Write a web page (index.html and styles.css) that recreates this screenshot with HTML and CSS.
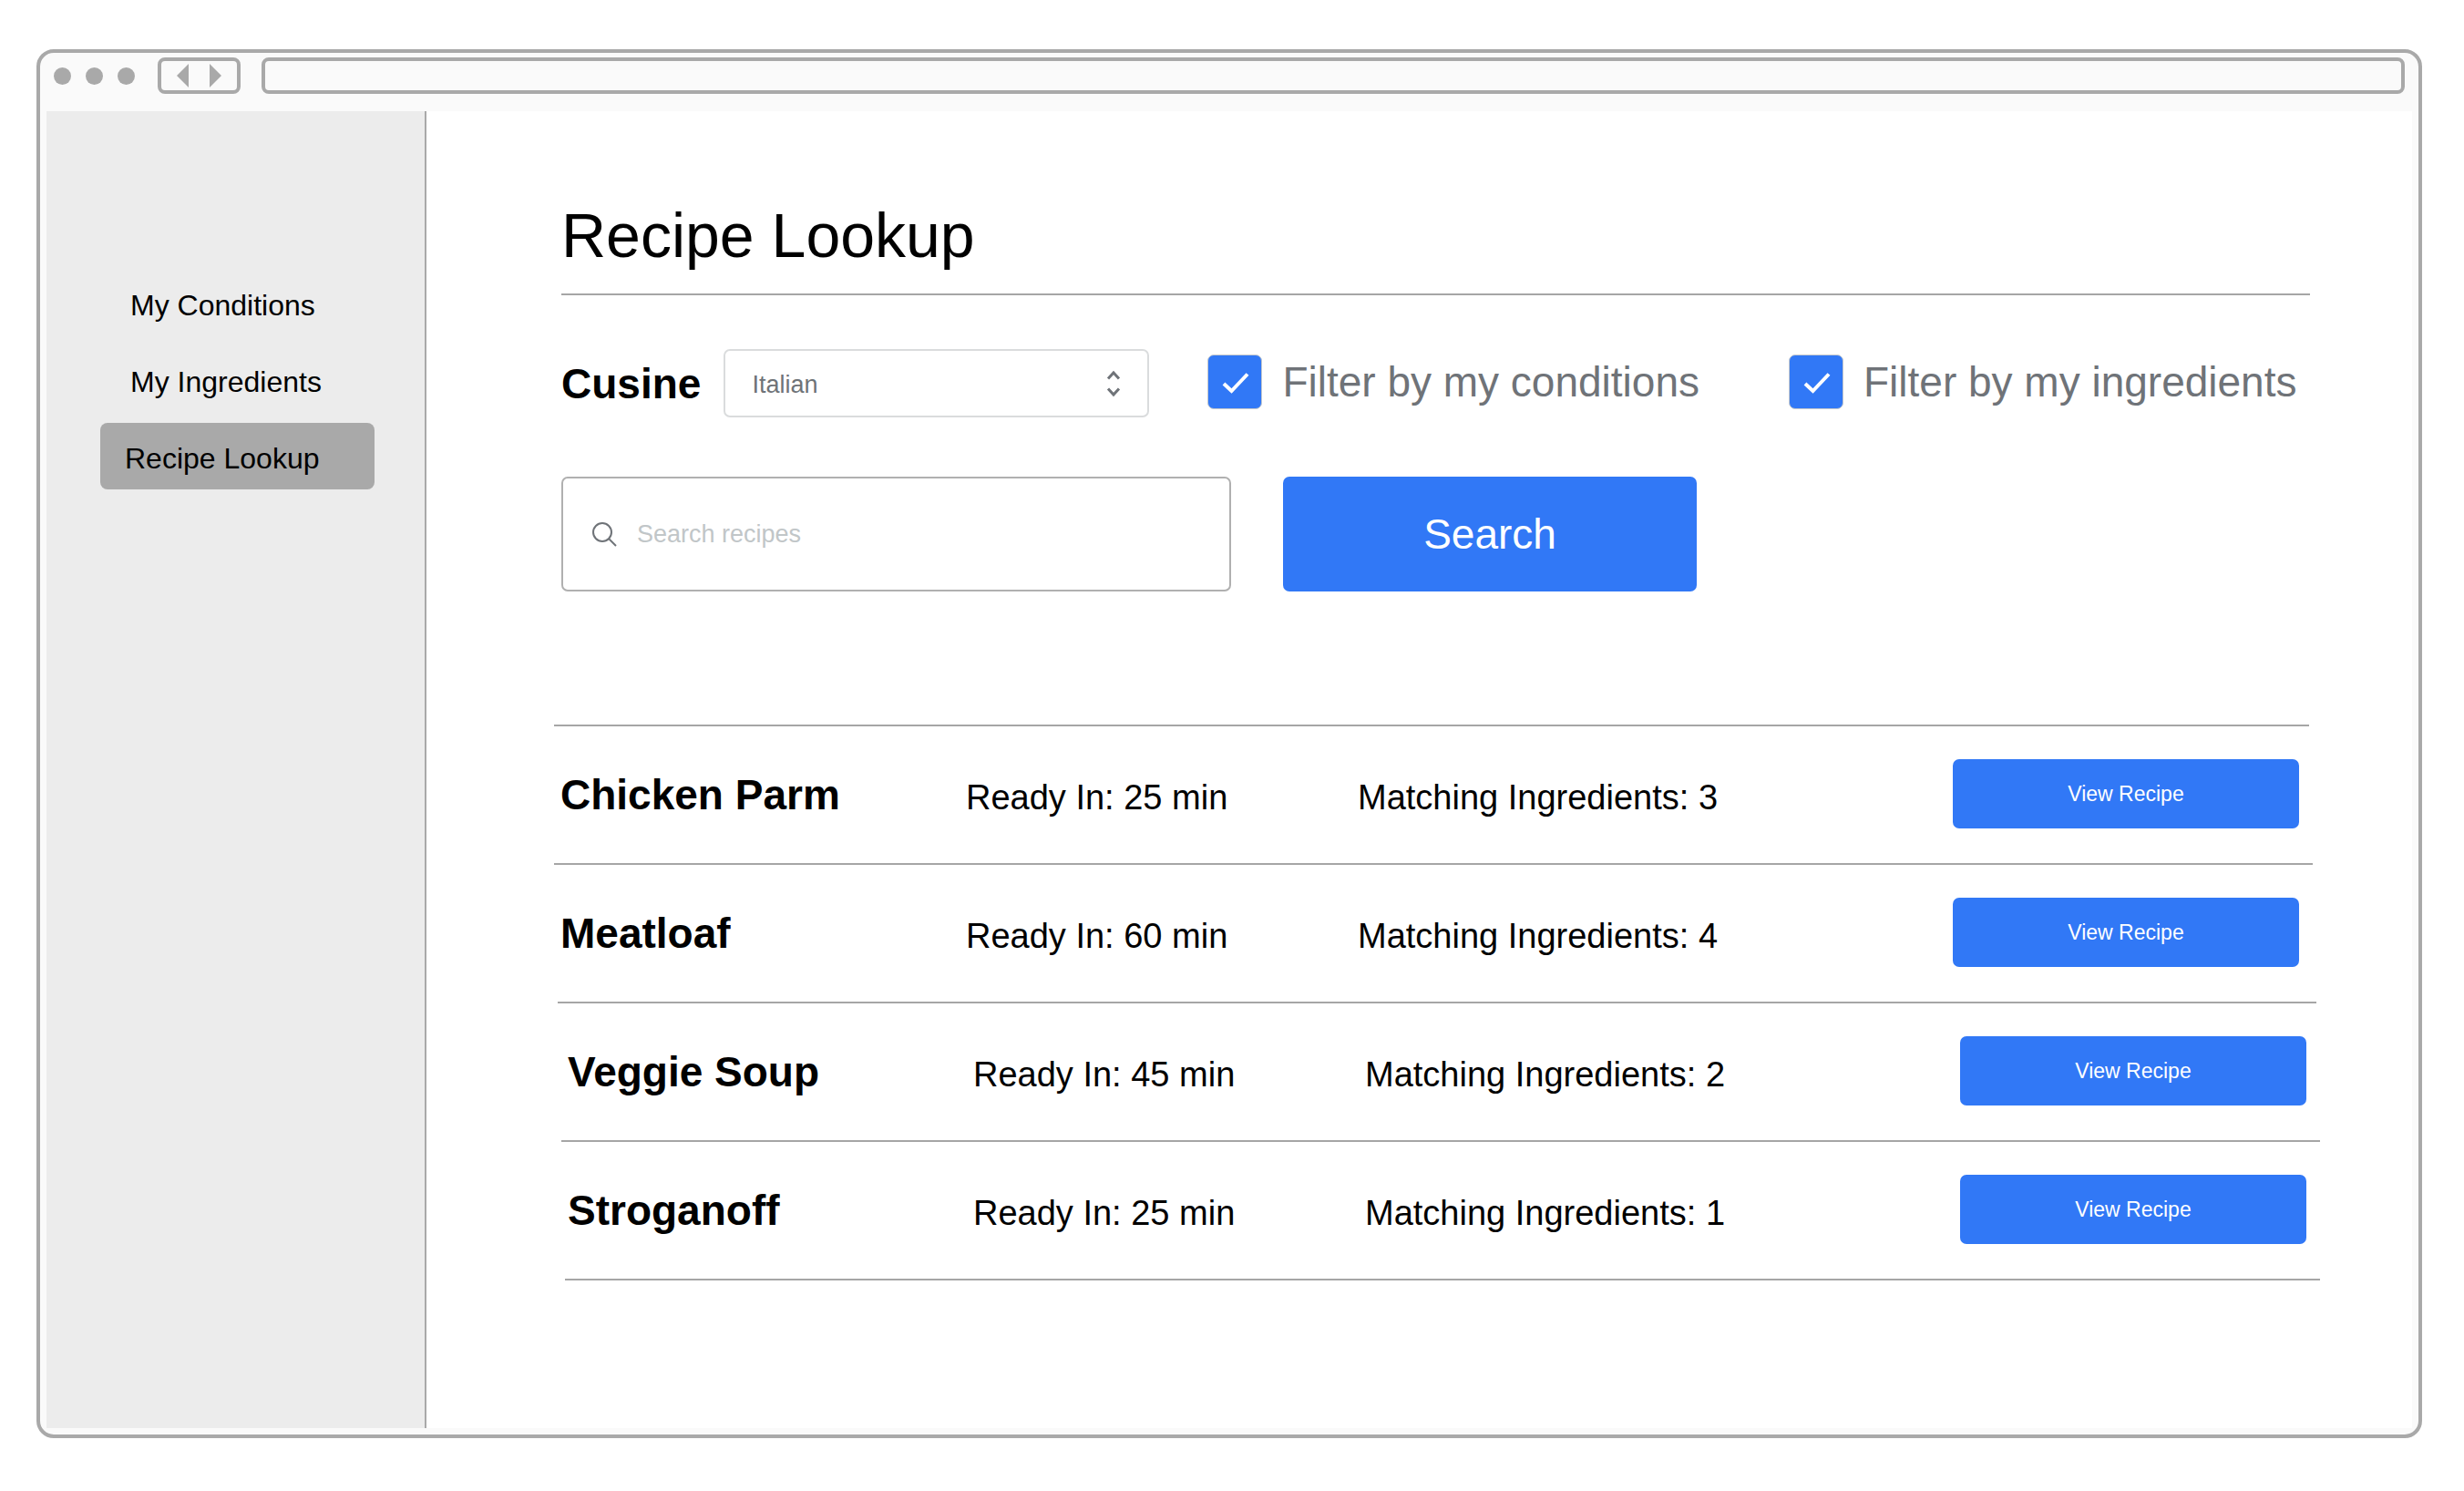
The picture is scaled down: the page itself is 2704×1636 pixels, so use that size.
FILE: index.html
```html
<!DOCTYPE html>
<html lang="en">
<head>
<meta charset="utf-8">
<meta name="viewport" content="width=device-width, initial-scale=1">
<title>Recipe Lookup</title>
<link rel="stylesheet" href="styles.css">
</head>
<body>
<div class="window">
  <header class="toolbar">
    <div class="dots"><span class="dot"></span><span class="dot"></span><span class="dot"></span></div>
    <div class="history">
      <button class="history-button" type="button" aria-label="Back"><svg width="13" height="26" viewBox="0 0 13 26"><path d="M13 0v26L0 13z"/></svg></button>
      <button class="history-button" type="button" aria-label="Forward"><svg width="13" height="26" viewBox="0 0 13 26"><path d="M0 0v26l13-13z"/></svg></button>
    </div>
    <input class="address" type="text" aria-label="Address">
  </header>
  <div class="page">
    <nav class="sidebar">
      <a class="nav-link" href="#conditions">My Conditions</a>
      <a class="nav-link" href="#ingredients">My Ingredients</a>
      <a class="nav-link nav-link-active" href="#lookup" aria-current="page">Recipe Lookup</a>
    </nav>
    <main class="content">
      <h1 class="title">Recipe Lookup</h1>
      <form class="lookup">
        <div class="filters">
          <label class="cuisine-label" for="cuisine">Cusine</label>
          <div class="select-wrap">
            <select class="select" id="cuisine"><option>Italian</option></select>
            <svg class="select-arrows" width="16" height="30" viewBox="0 0 16 30"><path d="M2 9.500l6-6.500 6 6.500M2 20.500l6 6.500 6-6.500"/></svg>
          </div>
          <div class="check">
            <span class="check-box"><input class="check-input" type="checkbox" id="by-conditions" checked><svg class="check-mark" width="60" height="60" viewBox="0 0 60 60"><path d="M18 32l8.500 8L44 21.500"/></svg></span>
            <label for="by-conditions">Filter by my conditions</label>
          </div>
          <div class="check check-last">
            <span class="check-box"><input class="check-input" type="checkbox" id="by-ingredients" checked><svg class="check-mark" width="60" height="60" viewBox="0 0 60 60"><path d="M18 32l8.500 8L44 21.500"/></svg></span>
            <label for="by-ingredients">Filter by my ingredients</label>
          </div>
        </div>
        <div class="search">
          <div class="search-field">
            <svg width="28" height="28" viewBox="0 0 28 28"><circle cx="12" cy="12" r="10"/><path d="M19 19l8 8"/></svg>
            <input class="search-input" type="text" placeholder="Search recipes" aria-label="Search recipes">
          </div>
          <button class="button search-button" type="button">Search</button>
        </div>
      </form>
      <section class="results" aria-label="Recipes">
        <hr class="rule right-3">
        <article class="recipe">
          <h2 class="recipe-name">Chicken Parm</h2>
          <p class="recipe-fact">Ready In: 25 min</p>
          <p class="recipe-fact">Matching Ingredients: 3</p>
          <button class="button" type="button">View Recipe</button>
        </article>
        <hr class="rule right-2">
        <article class="recipe">
          <h2 class="recipe-name">Meatloaf</h2>
          <p class="recipe-fact">Ready In: 60 min</p>
          <p class="recipe-fact">Matching Ingredients: 4</p>
          <button class="button" type="button">View Recipe</button>
        </article>
        <hr class="rule left-1 right-1">
        <article class="recipe recipe-shifted">
          <h2 class="recipe-name">Veggie Soup</h2>
          <p class="recipe-fact">Ready In: 45 min</p>
          <p class="recipe-fact">Matching Ingredients: 2</p>
          <button class="button" type="button">View Recipe</button>
        </article>
        <hr class="rule left-2">
        <article class="recipe recipe-shifted">
          <h2 class="recipe-name">Stroganoff</h2>
          <p class="recipe-fact">Ready In: 25 min</p>
          <p class="recipe-fact">Matching Ingredients: 1</p>
          <button class="button" type="button">View Recipe</button>
        </article>
        <hr class="rule left-3">
      </section>
    </main>
  </div>
</div>
</body>
</html>
```
FILE: styles.css
```css
:root {
  --line: #a6a6a6;
  --frame: #a9a9a9;
  --blue: #3178f6;
  --muted: #6f7378;
}

* {
  box-sizing: border-box;
}

body {
  margin: 0;
  padding: 54px 46px 58px 40px;
  background: #fff;
  color: #000;
  font-family: "Liberation Sans", Arial, sans-serif;
}

button,
input,
select {
  font: inherit;
}

/* Browser frame */
.window {
  display: flex;
  flex-direction: column;
  min-height: calc(100vh - 112px);
  border: 4px solid var(--frame);
  border-radius: 19px;
  background: #fafafa;
}

.toolbar {
  display: flex;
  align-items: flex-start;
  height: 64px;
  padding: 5px 15px 0;
}

.dots {
  display: flex;
  align-items: center;
  gap: 16px;
  height: 40px;
  margin-right: 25px;
}

.dot {
  width: 19px;
  height: 19px;
  border-radius: 50%;
  background: var(--frame);
}

.history {
  display: flex;
  align-items: center;
  justify-content: center;
  gap: 23px;
  width: 91px;
  height: 40px;
  margin-right: 23px;
  border: 4px solid var(--frame);
  border-radius: 8px;
}

.history-button {
  display: flex;
  padding: 0;
  border: 0;
  background: none;
}

.history-button svg {
  fill: var(--frame);
}

.address {
  flex: 1;
  min-width: 0;
  height: 40px;
  padding: 0 12px;
  border: 4px solid var(--frame);
  border-radius: 8px;
  background: transparent;
  font-size: 23px;
}

.page {
  display: flex;
  flex: 1;
  margin: 0 7px 7px;
  background: #fff;
}

/* Sidebar */
.sidebar {
  display: flex;
  flex: none;
  flex-direction: column;
  gap: 11px;
  width: 417px;
  padding: 174px 55px 0 59px;
  border-right: 2px solid var(--frame);
  background: #ececec;
}

.nav-link {
  height: 73px;
  padding: 4px 0 0 33px;
  border-radius: 8px;
  color: inherit;
  font-size: 32px;
  line-height: 70px;
  text-decoration: none;
  white-space: nowrap;
}

.nav-link-active {
  padding-left: 27px;
  background: var(--frame);
}

/* Main column */
.content {
  flex: 1;
  min-width: 0;
  padding: 96px 101px 0 140px;
}

.title {
  margin: 0 11px 0 8px;
  padding-bottom: 24px;
  border-bottom: 2px solid var(--line);
  font-size: 68px;
  font-weight: 400;
  line-height: 80px;
}

.lookup {
  margin: 59px 11px 0 8px;
}

.filters {
  display: flex;
  align-items: center;
  font-size: 46px;
  line-height: 52px;
  white-space: nowrap;
}

.cuisine-label {
  margin-right: 25px;
  font-weight: 700;
}

.select-wrap {
  position: relative;
  width: 467px;
  margin-right: 64px;
}

.select {
  display: block;
  width: 100%;
  height: 75px;
  padding: 2px 60px 0 29px;
  border: 2px solid #dadcdd;
  border-radius: 7px;
  appearance: none;
  background: #fff;
  color: var(--muted);
  font-size: 27px;
}

.select-arrows {
  position: absolute;
  top: 23px;
  right: 31px;
  fill: none;
  stroke: var(--muted);
  stroke-width: 3;
  pointer-events: none;
}

.check {
  display: flex;
  align-items: center;
  gap: 22px;
  padding-bottom: 4px;
  color: var(--muted);
}

.check-last {
  margin-left: 98px;
}

.check-box {
  position: relative;
  flex: none;
  width: 60px;
  height: 60px;
}

.check-input {
  display: block;
  width: 60px;
  height: 60px;
  margin: 0;
  border: 1px solid #c4c8cc;
  border-radius: 7px;
  appearance: none;
  background: #fff;
}

.check-input:checked {
  background: var(--blue);
}

.check-mark {
  position: absolute;
  inset: 0;
  fill: none;
  stroke: #fff;
  stroke-width: 4;
  pointer-events: none;
}

.search {
  display: flex;
  gap: 57px;
  margin-top: 65px;
}

.search-field {
  display: flex;
  align-items: center;
  gap: 22px;
  width: 735px;
  height: 126px;
  padding: 0 31px;
  border: 2px solid #b0b0b0;
  border-radius: 7px;
}

.search-field svg {
  flex: none;
  fill: none;
  stroke: var(--muted);
  stroke-width: 2;
}

.search-input {
  flex: 1;
  min-width: 0;
  padding: 0;
  border: 0;
  background: none;
  font-size: 27px;
}

.search-input::placeholder {
  color: #c1c6c8;
  opacity: 1;
}

.button {
  height: 76px;
  padding: 0;
  border: 0;
  border-radius: 7px;
  background: var(--blue);
  color: #fff;
  font-size: 23px;
}

.search-button {
  width: 454px;
  height: 126px;
  font-size: 46px;
}

/* Results: each rule and the later rows step to the right */
.results {
  margin-top: 146px;
}

.rule {
  height: 2px;
  margin: 0;
  border: 0;
  background: var(--line);
}

.left-1 { margin-left: 4px; }
.left-2 { margin-left: 8px; }
.left-3 { margin-left: 12px; }
.right-1 { margin-right: 4px; }
.right-2 { margin-right: 8px; }
.right-3 { margin-right: 12px; }

.recipe {
  display: grid;
  grid-template-columns: 445fr 430fr 653fr 380fr;
  align-items: center;
  padding: 36px 23px 38px 7px;
}

.recipe-shifted {
  padding-right: 15px;
  padding-left: 15px;
}

.recipe-name,
.recipe-fact {
  margin: 0;
  white-space: nowrap;
}

.recipe-name {
  padding-top: 2px;
  font-size: 46px;
  line-height: 52px;
}

.recipe-fact {
  padding-top: 8px;
  font-size: 38px;
  line-height: 44px;
}
```
